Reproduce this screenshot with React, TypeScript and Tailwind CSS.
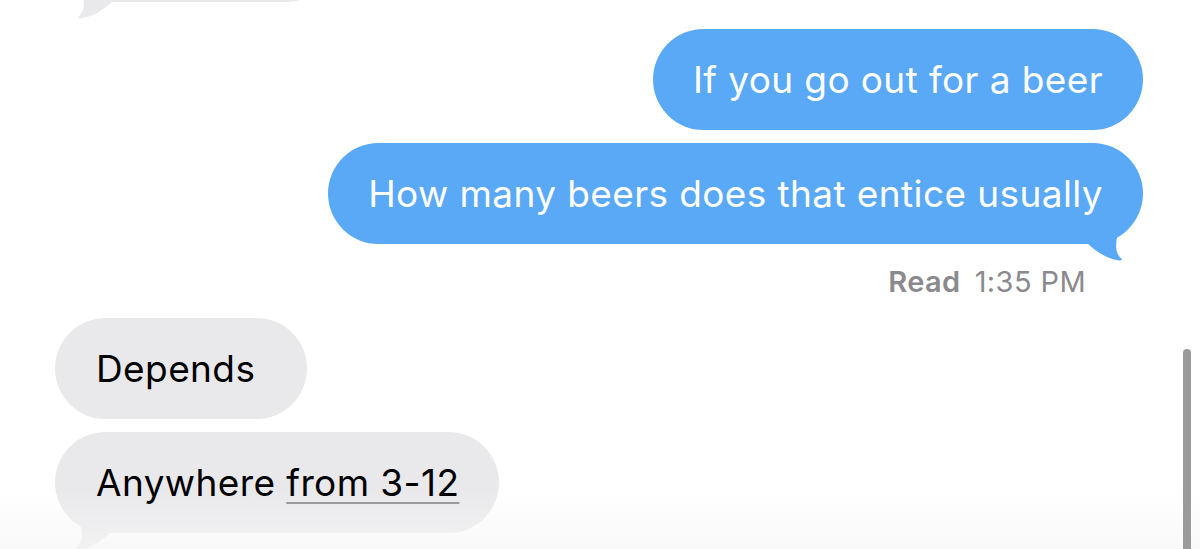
import React from "react";

const font = { fontFamily: "Inter, 'Noto Sans', 'Liberation Sans', sans-serif" };

function BlueTail() {
  return (
    <svg
      className="absolute right-[18px] bottom-[-18px] pointer-events-none"
      width="45"
      height="40"
      viewBox="0 0 45 40"
    >
      <path
        d="M5 8 L39 8 Q 32 30 42 37 Q 41.5 39 39 38.5 Q 22 36 6 20 Z"
        fill="#5aa9f6"
      />
    </svg>
  );
}

function GrayTail() {
  return (
    <svg
      className="absolute left-[18px] bottom-[-18px] pointer-events-none"
      width="45"
      height="40"
      viewBox="0 0 45 40"
    >
      <path
        d="M40 8 L6 8 Q 13 30 3 37 Q 3.5 39 6 38.5 Q 23 36 39 20 Z"
        fill="#e9e9eb"
      />
    </svg>
  );
}

function Sent({ text, tail }: { text: string; tail?: boolean }) {
  return (
    <div className="flex justify-end pr-[57px]">
      <div className="relative h-[101px] flex items-center px-[40px] rounded-[51px] bg-[#5aa9f6] text-white text-[37px] tracking-[0.4px] leading-none whitespace-nowrap">
        <span className="relative z-10">{text}</span>
        {tail && <BlueTail />}
      </div>
    </div>
  );
}

function Received({
  children,
  tail,
  wide,
}: {
  children: React.ReactNode;
  tail?: boolean;
  wide?: boolean;
}) {
  return (
    <div className="flex justify-start pl-[55px]">
      <div
        className={`relative h-[101px] flex items-center pl-[41px] ${wide ? "pr-[52px]" : "pr-[40px]"} rounded-[51px] bg-[#e9e9eb] text-black text-[37px] tracking-[0.4px] leading-none whitespace-nowrap`}
      >
        <span className="relative z-10">{children}</span>
        {tail && <GrayTail />}
      </div>
    </div>
  );
}

export default function App() {
  return (
    <div className="relative w-[1200px] h-[549px] overflow-hidden bg-white" style={font}>
      <div className="flex flex-col">
        {/* previous message, mostly scrolled away */}
        <div className="flex justify-start pl-[57px] mt-[-100px]">
          <div className="relative h-[102px] w-[280px] rounded-[51px] bg-[#e9e9eb]">
            <GrayTail />
          </div>
        </div>

        <div className="mt-[27px]">
          <Sent text="If you go out for a beer" />
        </div>
        <div className="mt-[13px]">
          <Sent text="How many beers does that entice usually" tail />
        </div>

        <div className="flex justify-end pr-[114px] mt-[22px] text-[29px] tracking-[0.4px] leading-[32px] text-[#8a8a8e]">
          <span className="font-semibold">Read</span>
          <span className="ml-[14px]">1:35 PM</span>
        </div>

        <div className="mt-[20px]">
          <Received wide>Depends</Received>
        </div>
        <div className="mt-[13px]">
          <Received tail>
            Anywhere{" "}
            <span className="underline decoration-[#9a9a9e] decoration-2 underline-offset-[6px]">
              from 3-12
            </span>
          </Received>
        </div>
      </div>

      {/* bottom fade */}
      <div className="absolute left-0 right-0 bottom-0 h-[60px] bg-gradient-to-b from-white/0 to-[#f6f6f7]/70 pointer-events-none" />

      {/* scroll indicator */}
      <div className="absolute left-[1183px] top-[349px] w-[8px] h-[220px] rounded-full bg-[#9a9a9a]" />
    </div>
  );
}
